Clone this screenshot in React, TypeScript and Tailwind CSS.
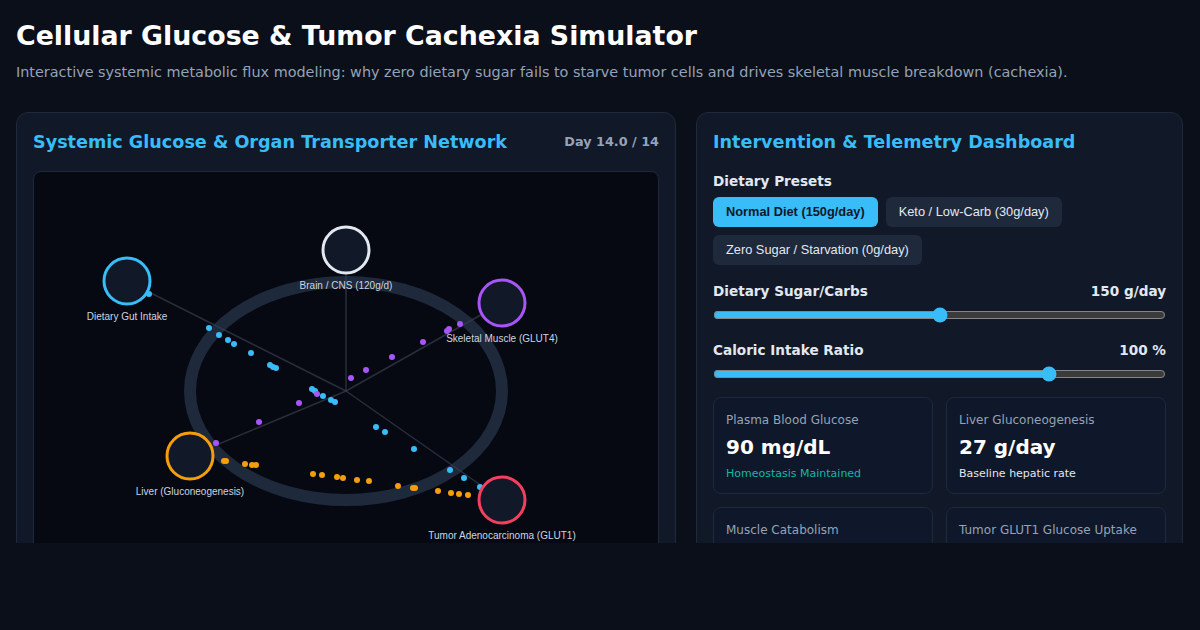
import { useState } from 'react';

type Node = { x: number; y: number; r: number; color: string; label: string };

// page coordinates; the svg viewBox is offset to the canvas box origin
const CENTER = { x: 346, y: 391 };

const NODES: Node[] = [
  { x: 127, y: 281, r: 23, color: '#38bdf8', label: 'Dietary Gut Intake' },
  { x: 346, y: 250, r: 23, color: '#e2e8f0', label: 'Brain / CNS (120g/d)' },
  { x: 502, y: 303, r: 23, color: '#a855f7', label: 'Skeletal Muscle (GLUT4)' },
  { x: 190, y: 456, r: 23, color: '#f59e0b', label: 'Liver (Gluconeogenesis)' },
  { x: 502, y: 500, r: 23, color: '#f43f5e', label: 'Tumor Adenocarcinoma (GLUT1)' },
];

const BLUE = [
  [149, 294], [209, 328], [219, 335], [228, 340], [234, 344], [251, 353], [270, 365], [273, 367],
  [276, 368], [312, 389], [315, 391], [323, 396], [331, 400], [335, 402], [376, 427], [385, 432],
  [414, 449], [450, 470], [464, 478], [480, 487],
];
const PURPLE = [
  [216, 443], [259, 422], [299, 403], [317, 394], [351, 378], [366, 370], [392, 357], [423, 342],
  [447, 331], [449, 329], [460, 324],
];
const ORANGE = [
  [224, 461], [226, 461], [245, 464], [252, 465], [256, 465], [313, 474], [322, 475], [337, 477],
  [343, 478], [357, 480], [369, 481], [398, 486], [413, 488], [415, 488], [438, 491], [451, 493],
  [459, 494], [468, 495],
];

function Network() {
  return (
    <svg viewBox="34 172 624 398" className="block h-full w-full">
      <ellipse cx={CENTER.x} cy={CENTER.y} rx={156} ry={109} fill="none" stroke="#1e293b" strokeWidth={12} />
      {NODES.map((n) => (
        <line key={n.label} x1={CENTER.x} y1={CENTER.y} x2={n.x} y2={n.y} stroke="#3b4250" strokeOpacity={0.65} strokeWidth={1.5} />
      ))}
      {BLUE.map(([x, y], i) => (
        <circle key={'b' + i} cx={x} cy={y} r={3} fill="#38bdf8" />
      ))}
      {PURPLE.map(([x, y], i) => (
        <circle key={'p' + i} cx={x} cy={y} r={3} fill="#a855f7" />
      ))}
      {ORANGE.map(([x, y], i) => (
        <circle key={'o' + i} cx={x} cy={y} r={3} fill="#f59e0b" />
      ))}
      {NODES.map((n) => (
        <g key={n.label + 'n'}>
          <circle cx={n.x} cy={n.y} r={n.r} fill="#111827" stroke={n.color} strokeWidth={3} />
          <text
            x={n.x}
            y={n.y + 39}
            textAnchor="middle"
            fill="#cbd5e1"
            fontSize={10}
            fontFamily="'Liberation Sans', Arial, sans-serif"
          >
            {n.label}
          </text>
        </g>
      ))}
    </svg>
  );
}

function Stat({ label, value, note, noteClass }: { label: string; value: string; note: string; noteClass: string }) {
  return (
    <div className="h-[97px] rounded-lg border border-[#1e293b] bg-[#0f172a] px-[12px] pt-[13px]">
      <div className="text-[12px] leading-[18px] text-[#94a3b8]">{label}</div>
      <div className="mt-[4px] text-[20px] font-bold leading-[28px] text-white">{value}</div>
      <div className={'mt-[5px] text-[11px] leading-[16px] ' + noteClass}>{note}</div>
    </div>
  );
}

const PRESETS = ['Normal Diet (150g/day)', 'Keto / Low-Carb (30g/day)', 'Zero Sugar / Starvation (0g/day)'];

export default function App() {
  const [preset, setPreset] = useState(0);
  const [sugar, setSugar] = useState(150);
  const [ratio, setRatio] = useState(100);

  return (
    <div className="h-[630px] bg-[#0b0f19] font-['DejaVu_Sans',sans-serif] text-[#e2e8f0]">
      <div className="h-[543px] overflow-hidden px-4 pt-[18px]">
        <h1 className="text-[26.8px] font-bold leading-[36px] text-white">Cellular Glucose &amp; Tumor Cachexia Simulator</h1>
        <p className="mt-[8px] text-[14.4px] leading-[20px] text-[#94a3b8]">
          Interactive systemic metabolic flux modeling: why zero dietary sugar fails to starve tumor cells and drives skeletal muscle breakdown (cachexia).
        </p>

        <div className="mt-[30px] grid grid-cols-[660px_487px] gap-[20px]">
          <section className="rounded-xl border border-[#1e293b] bg-[#111827] px-4 pt-[15px]">
            <div className="mb-[15px] flex h-[28px] items-center justify-between">
              <h2 className="text-[17.6px] font-bold text-[#38bdf8]">Systemic Glucose &amp; Organ Transporter Network</h2>
              <span className="text-[12.8px] font-bold text-[#94a3b8]">Day 14.0 / 14</span>
            </div>
            <div className="h-[400px] overflow-hidden rounded-lg border border-[#1e293b] bg-[#060912]">
              <Network />
            </div>
          </section>

          <section className="rounded-xl border border-[#1e293b] bg-[#111827] px-4 pt-[15px]">
            <h2 className="mb-[15px] h-[28px] text-[17.6px] font-bold leading-[28px] text-[#38bdf8]">Intervention &amp; Telemetry Dashboard</h2>

            <div className="text-[13.6px] font-bold leading-[20px] text-[#e2e8f0]">Dietary Presets</div>
            <div className="mt-[6px] flex flex-wrap gap-2 font-['Liberation_Sans',Arial,sans-serif]">
              {PRESETS.map((p, i) => (
                <button
                  key={p}
                  onClick={() => setPreset(i)}
                  className={
                    'h-[30px] rounded-md px-[13px] text-[12.8px] ' +
                    (preset === i ? 'bg-[#38bdf8] font-bold text-[#0f172a]' : 'bg-[#1e293b] text-[#e2e8f0]')
                  }
                >
                  {p}
                </button>
              ))}
            </div>

            <div className="mt-[16px] flex justify-between text-[13.6px] font-bold leading-[20px]">
              <span>Dietary Sugar/Carbs</span>
              <span>{sugar} g/day</span>
            </div>
            <input
              type="range"
              min={0}
              max={300}
              value={sugar}
              onChange={(e) => setSugar(Number(e.target.value))}
              className="mt-[6px] block w-full accent-[#38bdf8]"
            />

            <div className="mt-[17px] flex justify-between text-[13.6px] font-bold leading-[20px]">
              <span>Caloric Intake Ratio</span>
              <span>{ratio} %</span>
            </div>
            <input
              type="range"
              min={40}
              max={120}
              value={ratio}
              onChange={(e) => setRatio(Number(e.target.value))}
              className="mt-[6px] block w-full accent-[#38bdf8]"
            />

            <div className="mt-[15px] grid grid-cols-2 gap-[13px]">
              <Stat label="Plasma Blood Glucose" value="90 mg/dL" note="Homeostasis Maintained" noteClass="text-[#14b8a6]" />
              <Stat label="Liver Gluconeogenesis" value="27 g/day" note="Baseline hepatic rate" noteClass="text-[#e2e8f0]" />
              <Stat label="Muscle Catabolism" value="0 g/day" note="Protein preserved" noteClass="text-[#e2e8f0]" />
              <Stat label="Tumor GLUT1 Glucose Uptake" value="35 g/day" note="High affinity uptake" noteClass="text-[#e2e8f0]" />
            </div>
          </section>
        </div>
      </div>
    </div>
  );
}
